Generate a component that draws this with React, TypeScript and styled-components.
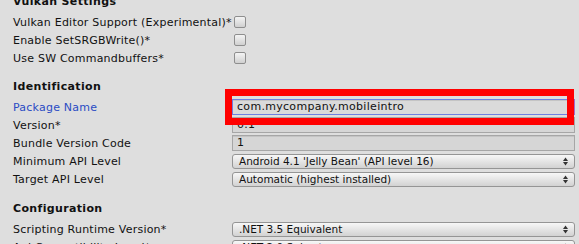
import styled, { createGlobalStyle } from 'styled-components'

const Global = createGlobalStyle`
	html, body {
		margin: 0;
		padding: 0;
		background: #dedede;
		overflow: hidden;
	}
	body {
		font-family: 'DejaVu Sans', Verdana, sans-serif;
		font-size: 11px;
		color: #111;
	}
`

type Row =
	| { kind: 'check'; label: string }
	| { kind: 'text'; label: string; value: string; focus?: boolean }
	| { kind: 'select'; label: string; value: string }

const sections: { title: string; rows: Row[] }[] = [
	{
		title: 'Vulkan Settings',
		rows: [
			{ kind: 'check', label: 'Vulkan Editor Support (Experimental)*' },
			{ kind: 'check', label: 'Enable SetSRGBWrite()*' },
			{ kind: 'check', label: 'Use SW Commandbuffers*' },
		],
	},
	{
		title: 'Identification',
		rows: [
			{ kind: 'text', label: 'Package Name', value: 'com.mycompany.mobileintro', focus: true },
			{ kind: 'text', label: 'Version*', value: '0.1' },
			{ kind: 'text', label: 'Bundle Version Code', value: '1' },
			{ kind: 'select', label: 'Minimum API Level', value: "Android 4.1 'Jelly Bean' (API level 16)" },
			{ kind: 'select', label: 'Target API Level', value: 'Automatic (highest installed)' },
		],
	},
	{
		title: 'Configuration',
		rows: [
			{ kind: 'select', label: 'Scripting Runtime Version*', value: '.NET 3.5 Equivalent' },
			{ kind: 'select', label: 'Api Compatibility Level*', value: '.NET 2.0 Subset' },
		],
	},
]

function Arrows() {
	return (
		<svg width="5" height="9" viewBox="0 0 5 9">
			<path d="M0 4 L2.5 0.5 L5 4 Z" fill="#333" />
			<path d="M0 5 L2.5 8.5 L5 5 Z" fill="#333" />
		</svg>
	)
}

export default function App() {
	return (
		<>
			<Global />
			<Panel>
				{sections.map((s) => (
					<Section key={s.title}>
						<Header>{s.title}</Header>
						{s.rows.map((r) => (
							<Line key={r.label}>
								<Label $focus={r.kind === 'text' && !!r.focus}>{r.label}</Label>
								<Cell>
									{r.kind === 'check' && <Check />}
									{r.kind === 'text' && (
										<>
											<Field $focus={!!r.focus}>{r.value}</Field>
											{r.focus && <Highlight />}
										</>
									)}
									{r.kind === 'select' && (
										<Select>
											<span>{r.value}</span>
											<Arrows />
										</Select>
									)}
								</Cell>
							</Line>
						))}
					</Section>
				))}
			</Panel>
		</>
	)
}

const Panel = styled.div`
	margin-top: -7px;
	padding: 0 4px 0 13px;
`

const Section = styled.div`
	margin-top: 11px;
	&:first-child {
		margin-top: 0;
	}
	&:last-child {
		margin-top: 12px;
	}
`

const Header = styled.div`
	height: 20px;
	line-height: 18px;
	font-weight: bold;
	letter-spacing: 0.35px;
`

const Line = styled.div`
	display: grid;
	grid-template-columns: 219px 1fr;
	height: 18px;
	align-items: center;
`

const Label = styled.div<{ $focus: boolean }>`
	white-space: nowrap;
	letter-spacing: 0.22px;
	color: ${(p) => (p.$focus ? '#2a4bc4' : '#111')};
`

const Cell = styled.div`
	position: relative;
	height: 16px;
	display: flex;
	align-items: center;
`

const Check = styled.div`
	width: 10px;
	height: 10px;
	margin-left: 2px;
	border: 1px solid #8e8e8e;
	border-radius: 2px;
	background: linear-gradient(#f4f4f4, #d0d0d0);
`

const Field = styled.div<{ $focus: boolean }>`
	box-sizing: border-box;
	width: 100%;
	height: 16px;
	line-height: 14px;
	padding: 0 4px;
	border: 1px solid ${(p) => (p.$focus ? '#6e7fe0' : '#a6a6a6')};
	border-right-color: ${(p) => (p.$focus ? '#a46cc8' : '#a6a6a6')};
	background: ${(p) => (p.$focus ? '#dadada' : '#d6d6d6')};
	box-shadow: inset 0 1px 0 #c4c4c4;
	letter-spacing: 0.3px;
	white-space: nowrap;
	overflow: hidden;
`

const Highlight = styled.div`
	position: absolute;
	z-index: 1;
	left: -7px;
	right: 1px;
	top: -10px;
	bottom: -10px;
	border: 7px solid #f00;
`

const Select = styled.div`
	box-sizing: border-box;
	width: 100%;
	height: 15px;
	display: flex;
	align-items: center;
	justify-content: space-between;
	padding: 0 6px 0 6px;
	border: 1px solid #959595;
	border-radius: 3px;
	background: linear-gradient(#f7f7f7, #d2d2d2);
	font-size: 10.5px;
	white-space: nowrap;
`
